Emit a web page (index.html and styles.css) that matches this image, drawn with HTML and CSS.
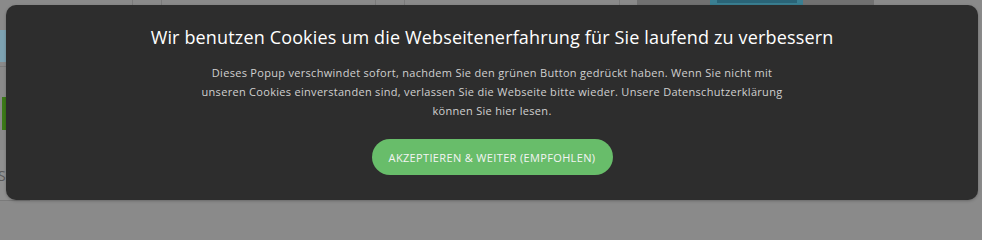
FILE: index.html
```html
<!DOCTYPE html>
<html lang="de">
<head>
<meta charset="utf-8">
<title>Cookies</title>
<link rel="stylesheet" href="styles.css">
</head>
<body>
<div class="page">
  <div class="topbar">
    <div class="cell c1"></div>
    <div class="cell c2"></div>
    <div class="cell c3"></div>
    <div class="cell c4"></div>
    <div class="cell c5"></div>
    <div class="cell c6"></div>
    <div class="cell c7"><div class="teal"><div class="teal-inner"></div></div></div>
    <div class="cell c8"></div>
  </div>
  <div class="side">
    <div class="side-img"></div>
    <div class="side-line"></div>
    <div class="side-green"></div>
    <div class="side-light"><span class="side-text">Se</span></div>
  </div>
</div>

<div class="popup">
  <h2 class="title">Wir benutzen Cookies um die Webseitenerfahrung für Sie laufend zu verbessern</h2>
  <p class="text">Dieses Popup verschwindet sofort, nachdem Sie den grünen Button gedrückt haben. Wenn Sie nicht mit unseren Cookies einverstanden sind, verlassen Sie die Webseite bitte wieder. Unsere Datenschutzerklärung können Sie hier lesen.</p>
  <button class="accept" type="button">AKZEPTIEREN &amp; WEITER (EMPFOHLEN)</button>
</div>
</body>
</html>
```

FILE: styles.css
```css
html, body {
  margin: 0;
  padding: 0;
}
body {
  width: 982px;
  height: 206px;
  overflow: hidden;
  background: #8a8a8a;
  font-family: "Open Sans", "Noto Sans", sans-serif;
  position: relative;
}
.page {
  display: flex;
  flex-direction: column;
}
.topbar {
  display: flex;
  height: 20px;
}
.cell {
  height: 100%;
  box-sizing: border-box;
}
.c1 { width: 133px; border-right: 1px solid #7a7a7a; }
.c2 { width: 29px; border-right: 1px solid #7a7a7a; }
.c3 { width: 214px; border-right: 1px solid #7a7a7a; }
.c4 { width: 29px; border-right: 1px solid #7a7a7a; }
.c5 { width: 215px; border-right: 1px solid #7a7a7a; }
.c6 { width: 17px; }
.c7 {
  width: 237px;
  background: #717171;
  display: flex;
  padding-left: 73px;
}
.c8 { flex: 1; }
.teal {
  width: 93px;
  height: 100%;
  background: #3a7f92;
  display: flex;
  justify-content: center;
}
.teal-inner {
  width: 80px;
  height: 3px;
  background: #2a6477;
}
.side {
  display: flex;
  flex-direction: column;
  width: 30px;
}
.side-img {
  margin-top: 10px;
  height: 32px;
  background: #7da2b2;
}
.side-line {
  margin-top: 4px;
  height: 1px;
  background: #7b7b7b;
}
.side-green {
  margin-top: 30px;
  margin-left: 2px;
  height: 33px;
  background: #3c7a18;
}
.side-light {
  margin-top: 20px;
  height: 50px;
  background: #909090;
  border-bottom: 1px solid #7a7a7a;
  display: flex;
  align-items: center;
}
.side-text {
  font-size: 14px;
  color: #5a5a5a;
  margin-left: -2px;
}

.popup {
  position: absolute;
  left: 6px;
  top: 5px;
  width: 972px;
  height: 195px;
  box-sizing: border-box;
  background: #2d2d2d;
  border-radius: 10px;
  display: flex;
  flex-direction: column;
  align-items: center;
  padding-top: 19px;
  box-shadow: 0 1px 3px rgba(0,0,0,0.25);
}
.title {
  margin: 0;
  font-size: 18px;
  line-height: 26px;
  font-weight: 500;
  color: #ffffff;
  letter-spacing: 0.15px;
}
.text {
  margin: 13px 0 0;
  max-width: 600px;
  font-size: 11px;
  line-height: 19px;
  color: #d0d0d0;
  text-align: center;
  letter-spacing: 0.3px;
}
.accept {
  margin-top: 19px;
  width: 241px;
  height: 36px;
  border: 0;
  border-radius: 18px;
  background: #68bd6a;
  color: #f4f4f4;
  font-family: inherit;
  font-size: 11px;
  letter-spacing: 0.35px;
  padding: 0;
  cursor: pointer;
}
```
